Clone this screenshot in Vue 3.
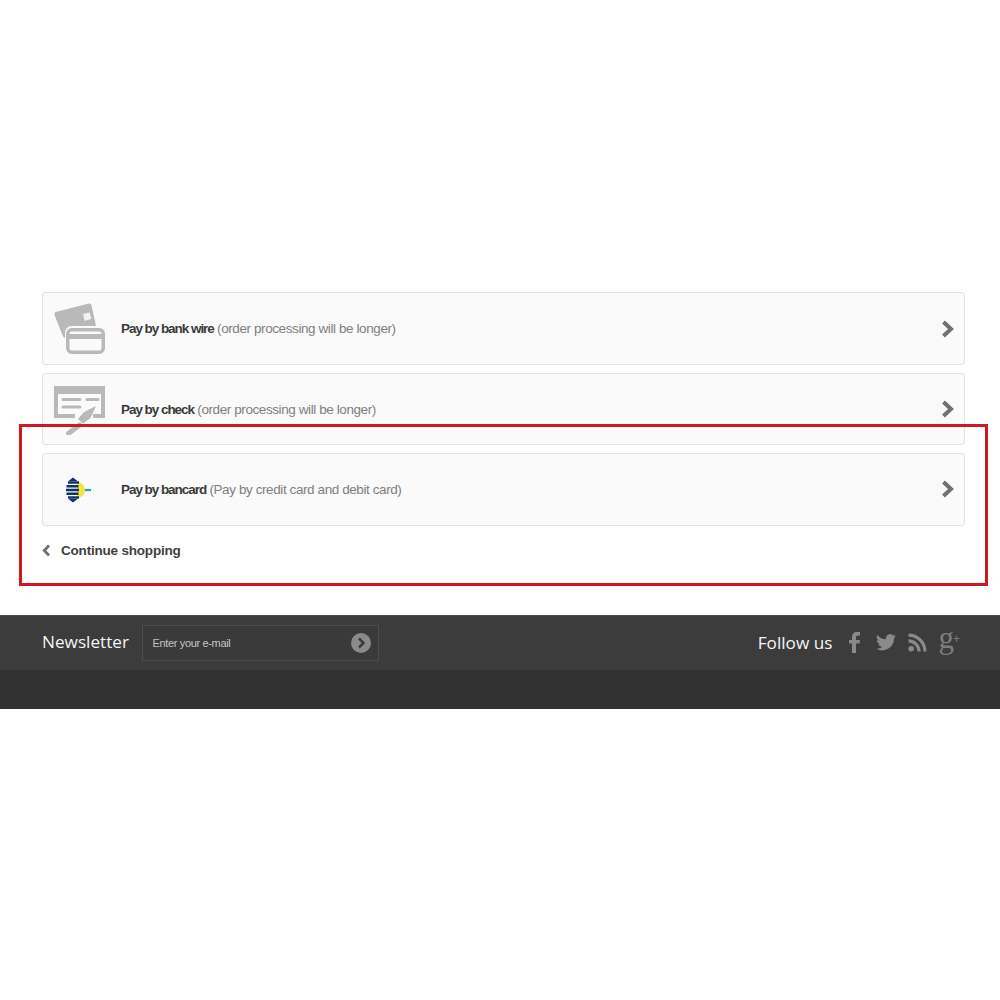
<template>
  <div class="page">
    <div class="steps">
      <div class="frame"></div>
      <a v-for="opt in options" :key="opt.name" class="option">
        <span class="pic">
          <svg v-if="opt.icon === 'wire'" width="52" height="52" viewBox="0 0 52 52">
            <path d="M1.500 9 35 .5Q37 .2 37.500 2L42 23H18Q11 23 11 31v4Q9 34 8 31L.5 12Q0 10 1.500 9Z" fill="#b9b9b9" />
            <rect x="29.700" y="10.200" width="6.800" height="6.800" transform="rotate(-14 33 13.500)" fill="#f2f2f2" />
            <rect x="13.750" y="26.750" width="35.500" height="22.500" rx="4" fill="#fafafa" stroke="#b9b9b9" stroke-width="3.500" />
            <rect x="13" y="31" width="37" height="5" fill="#b9b9b9" />
          </svg>
          <svg v-else-if="opt.icon === 'check'" width="52" height="52" viewBox="0 0 52 52">
            <path d="M0 3h51v32H39v-4h8V11H4v20h17v4H0Z" fill="#b9b9b9" />
            <path d="M9 16.500h17M9 24h17M33 16.500h11" stroke="#b9b9b9" stroke-width="3" stroke-linecap="round" />
            <path d="M42 23 36.500 35 29 40.500 24 36 30 29Z" fill="#b9b9b9" />
            <path d="M14.500 50.500 25.500 42" stroke="#b9b9b9" stroke-width="5" stroke-linecap="round" />
          </svg>
          <svg v-else width="52" height="52" viewBox="0 0 52 52">
            <path d="M27 27h10" stroke="#2a9fc4" stroke-width="2.200" />
            <path d="M23 18.500c5 1 8 4.500 8 8.500s-3 7.500-8 8.500Z" fill="#f0e447" />
            <path d="M14 19.500h11M12.500 23.300h12M12 27h13M12.500 30.700h12M14 34.500h11" stroke="#10306a" stroke-width="2.600" />
            <path d="M14.500 18 19 14.500l4.500 3.500ZM14.500 36 19 39.500l4.500-3.500Z" fill="#10306a" />
          </svg>
        </span>
        <span class="label"><b>{{ opt.name }}</b> {{ opt.note }}</span>
        <svg class="go" width="14" height="18" viewBox="0 0 14 18"><path d="M2.500 2 10 9 2.500 16" fill="none" stroke="#707070" stroke-width="4" /></svg>
      </a>
      <a class="back">
        <svg width="9" height="13" viewBox="0 0 9 13"><path d="M7 1.500 2.300 6.500 7 11.500" fill="none" stroke="#707070" stroke-width="2.800" /></svg>
        Continue shopping
      </a>
    </div>

    <footer class="foot">
      <div class="top">
        <div class="news">
          <span class="head">Newsletter</span>
          <div class="field">
            <span>Enter your e-mail</span>
            <span class="submit">
              <svg width="10" height="12" viewBox="0 0 10 12"><path d="M3 1.500 7.500 6 3 10.500" fill="none" stroke="#3b3b3b" stroke-width="2.500" /></svg>
            </span>
          </div>
        </div>
        <div class="follow">
          <span class="head">Follow us</span>
          <svg class="fb" width="11" height="21" viewBox="0 0 11 21"><path d="M3 21V11.500H0V8h3V5.500C3 2 4.800 0 8 0h3v3.500H9C7.500 3.500 7 4.200 7 5.500V8h4l-.5 3.500H7V21Z" fill="#8a8a8a" /></svg>
          <svg width="20" height="17" viewBox="0 0 24 20"><path d="M24 2.400c-.9.400-1.800.700-2.800.8 1-.6 1.800-1.600 2.200-2.700-1 .6-2 1-3.100 1.200A4.900 4.900 0 0 0 11.900 6.200 14 14 0 0 1 1.700.9a4.900 4.900 0 0 0 1.500 6.600c-.8 0-1.600-.2-2.200-.6 0 2.400 1.700 4.400 3.900 4.900-.7.200-1.500.2-2.200.1.600 2 2.400 3.400 4.600 3.400A9.900 9.900 0 0 1 0 17.300 14 14 0 0 0 21.500 5c1-.7 1.800-1.600 2.500-2.600Z" fill="#8a8a8a" /></svg>
          <svg width="19" height="19" viewBox="0 0 18 18"><circle cx="3" cy="15" r="2.600" fill="#8a8a8a" /><path d="M.5 7.500a10 10 0 0 1 10 10M.5 2a15.500 15.500 0 0 1 15.500 15.500" fill="none" stroke="#8a8a8a" stroke-width="3" /></svg>
          <span class="gplus">g<small>+</small></span>
        </div>
      </div>
      <div class="bottom"></div>
    </footer>
  </div>
</template>

<script setup>
const options = [
  { icon: 'wire', name: 'Pay by bank wire', note: '(order processing will be longer)' },
  { icon: 'check', name: 'Pay by check', note: '(order processing will be longer)' },
  { icon: 'bancard', name: 'Pay by bancard', note: '(Pay by credit card and debit card)' }
]
</script>

<style>
html, body { background: #fff; }
</style>

<style scoped>
.page {
  min-height: 1000px;
  padding-top: 292.400px;
  box-sizing: border-box;
  font-family: "Liberation Sans", Arial, sans-serif;
}
.steps {
  position: relative;
  margin: 0 35px 0 42px;
  display: flex;
  flex-direction: column;
  gap: 7.800px;
  height: 322.600px;
}
.frame {
  position: absolute;
  left: -23px;
  right: -23px;
  top: 132px;
  height: 162px;
  box-sizing: border-box;
  border: 3px solid #cc1a1f;
  z-index: 2;
}
.option {
  display: flex;
  align-items: center;
  height: 72.600px;
  box-sizing: border-box;
  border: 1px solid #e3e3e3;
  border-radius: 3px;
  background: #fafafa;
  padding: 0 9px 0 11px;
}
.pic {
  width: 52px;
  height: 52px;
  margin-right: 15px;
  flex: none;
}
.pic svg { display: block; }
.label {
  flex: 1;
  font-size: 13.500px;
  letter-spacing: -0.41px;
  color: #808080;
}
.label b {
  color: #3a3a3a;
  letter-spacing: -1.05px;
}
.go { flex: none; }
.back {
  display: flex;
  align-items: center;
  gap: 10px;
  margin-top: 9px;
  font-size: 13.500px;
  font-weight: 700;
  letter-spacing: -0.2px;
  color: #3f3f3f;
}
.top {
  height: 55px;
  background: #3c3c3c;
  border-top: 1px solid #4a4a4a;
  box-sizing: border-box;
  padding: 0 40px 0 42px;
  display: flex;
  align-items: center;
  justify-content: space-between;
}
.bottom {
  height: 39px;
  background: #323232;
}
.news, .follow { display: flex; align-items: center; }
.head {
  font-family: "Open Sans", sans-serif;
  font-size: 17.200px;
  font-weight: 400;
  color: #f5f5f5;
}
.news .head { margin-right: 12.500px; margin-top: -3px; }
.field {
  width: 237px;
  height: 36px;
  box-sizing: border-box;
  border: 1px solid #4c4c4c;
  background: #3a3a3a;
  padding: 0 7px 0 10px;
  display: flex;
  align-items: center;
  justify-content: space-between;
  font-size: 11px;
  letter-spacing: -0.35px;
  color: #c4c4c4;
}
.submit {
  width: 20px;
  height: 20px;
  border-radius: 50%;
  background: #8a8a8a;
  display: flex;
  align-items: center;
  justify-content: center;
}
.follow { gap: 12px; }
.follow .head { margin-right: 5px; }
.fb { margin-right: 4px; }
.gplus {
  font-family: "Liberation Serif", serif;
  font-size: 31px;
  line-height: 20px;
  color: #7c7c7c;
  margin-top: -8px;
  margin-left: -1px;
}
.gplus small { font-size: 12px; font-family: "Liberation Sans", sans-serif; vertical-align: 5px; margin-left: -1px; }
</style>
